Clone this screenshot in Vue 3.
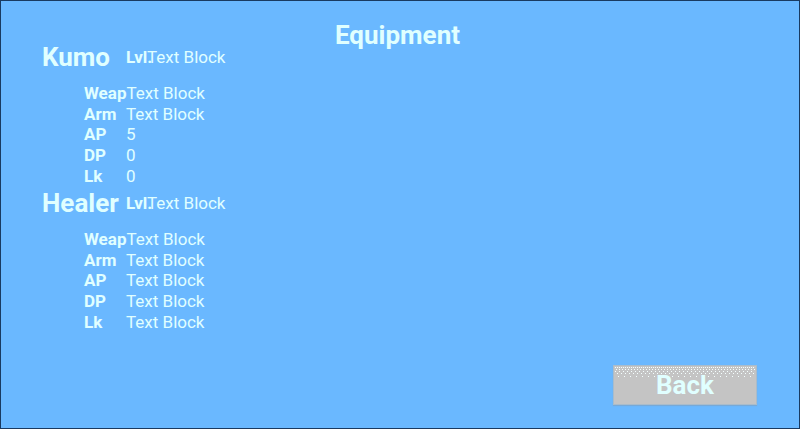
<script setup>
const heroes = [
  {
    name: 'Kumo',
    level: 'Text Block',
    stats: [
      ['Weap', 'Text Block'],
      ['Arm', 'Text Block'],
      ['AP', '5'],
      ['DP', '0'],
      ['Lk', '0'],
    ],
  },
  {
    name: 'Healer',
    level: 'Text Block',
    stats: [
      ['Weap', 'Text Block'],
      ['Arm', 'Text Block'],
      ['AP', 'Text Block'],
      ['DP', 'Text Block'],
      ['Lk', 'Text Block'],
    ],
  },
]
</script>

<template>
  <main class="screen">
    <h1 class="title">Equipment</h1>
    <div class="heroes">
      <section v-for="hero in heroes" :key="hero.name" class="hero">
        <header class="hero-head">
          <h2 class="name">{{ hero.name }}</h2>
          <span class="label level-label">Lvl.</span>
          <span class="value">{{ hero.level }}</span>
        </header>
        <dl class="stats">
          <div v-for="[label, value] in hero.stats" :key="label" class="stat">
            <dt class="label">{{ label }}</dt>
            <dd class="value">{{ value }}</dd>
          </div>
        </dl>
      </section>
    </div>
    <footer class="actions">
      <button type="button" class="back">
        <svg class="grain" aria-hidden="true" shape-rendering="crispEdges">
          <defs>
            <pattern id="grain" width="24" height="12" patternUnits="userSpaceOnUse">
              <path stroke="#f4ffff" stroke-dasharray="1 1" d="M0 1.5H24" />
              <path stroke="#f4ffff" stroke-dasharray="1 2" d="M1 3.5H24" />
              <path stroke="#f4ffff" stroke-dasharray="1 3" d="M0 5.5H24" />
              <path stroke="#f4ffff" stroke-dasharray="1 3" d="M2 7.5H24" />
              <path stroke="#f4ffff" stroke-dasharray="1 5" d="M3 10.5H24" />
            </pattern>
          </defs>
          <rect width="100%" height="100%" fill="url(#grain)" />
        </svg>
        <span class="back-text">Back</span>
      </button>
    </footer>
  </main>
</template>

<style>
body {
  margin: 0;
  background: #6ab8ff;
}
</style>

<style scoped>
.screen {
  box-sizing: border-box;
  min-height: 100vh;
  display: flex;
  flex-direction: column;
  padding: 18px 42px 23px 41px;
  border: 1px solid #193a61;
  background: #6ab8ff;
  color: #e0ffff;
  font-family: Roboto, sans-serif;
  font-size: 17px;
  line-height: 20px;
}

.title,
.name,
.back-text {
  margin: 0;
  font-size: 26px;
  line-height: 32px;
  font-weight: 700;
}

.title {
  margin-right: 4px;
  text-align: center;
}

.heroes {
  margin-top: -12px;
}

.hero-head {
  display: flex;
  align-items: center;
  height: 36px;
}

.name {
  min-width: 84px;
}

.label {
  font-weight: 700;
}

.level-label {
  width: 21px;
}

.stats {
  display: grid;
  grid-auto-rows: 1fr;
  min-height: 103px;
  margin: 8px 0 -1px 42px;
}

.stat {
  display: flex;
  align-items: center;
}

.stat .label {
  min-width: 42px;
}

.value {
  margin: 0;
}

.actions {
  display: flex;
  justify-content: flex-end;
  margin-top: auto;
}

.back {
  position: relative;
  width: 144px;
  height: 40px;
  padding: 0;
  border: 1px solid #a9bccb;
  background: #c4c4c4;
  color: inherit;
  font-family: inherit;
  box-shadow: 0 1px 1px #76a9d8;
}

.grain {
  position: absolute;
  top: 0;
  left: 1px;
  width: 140px;
  height: 12px;
}

.back-text {
  position: relative;
}
</style>
